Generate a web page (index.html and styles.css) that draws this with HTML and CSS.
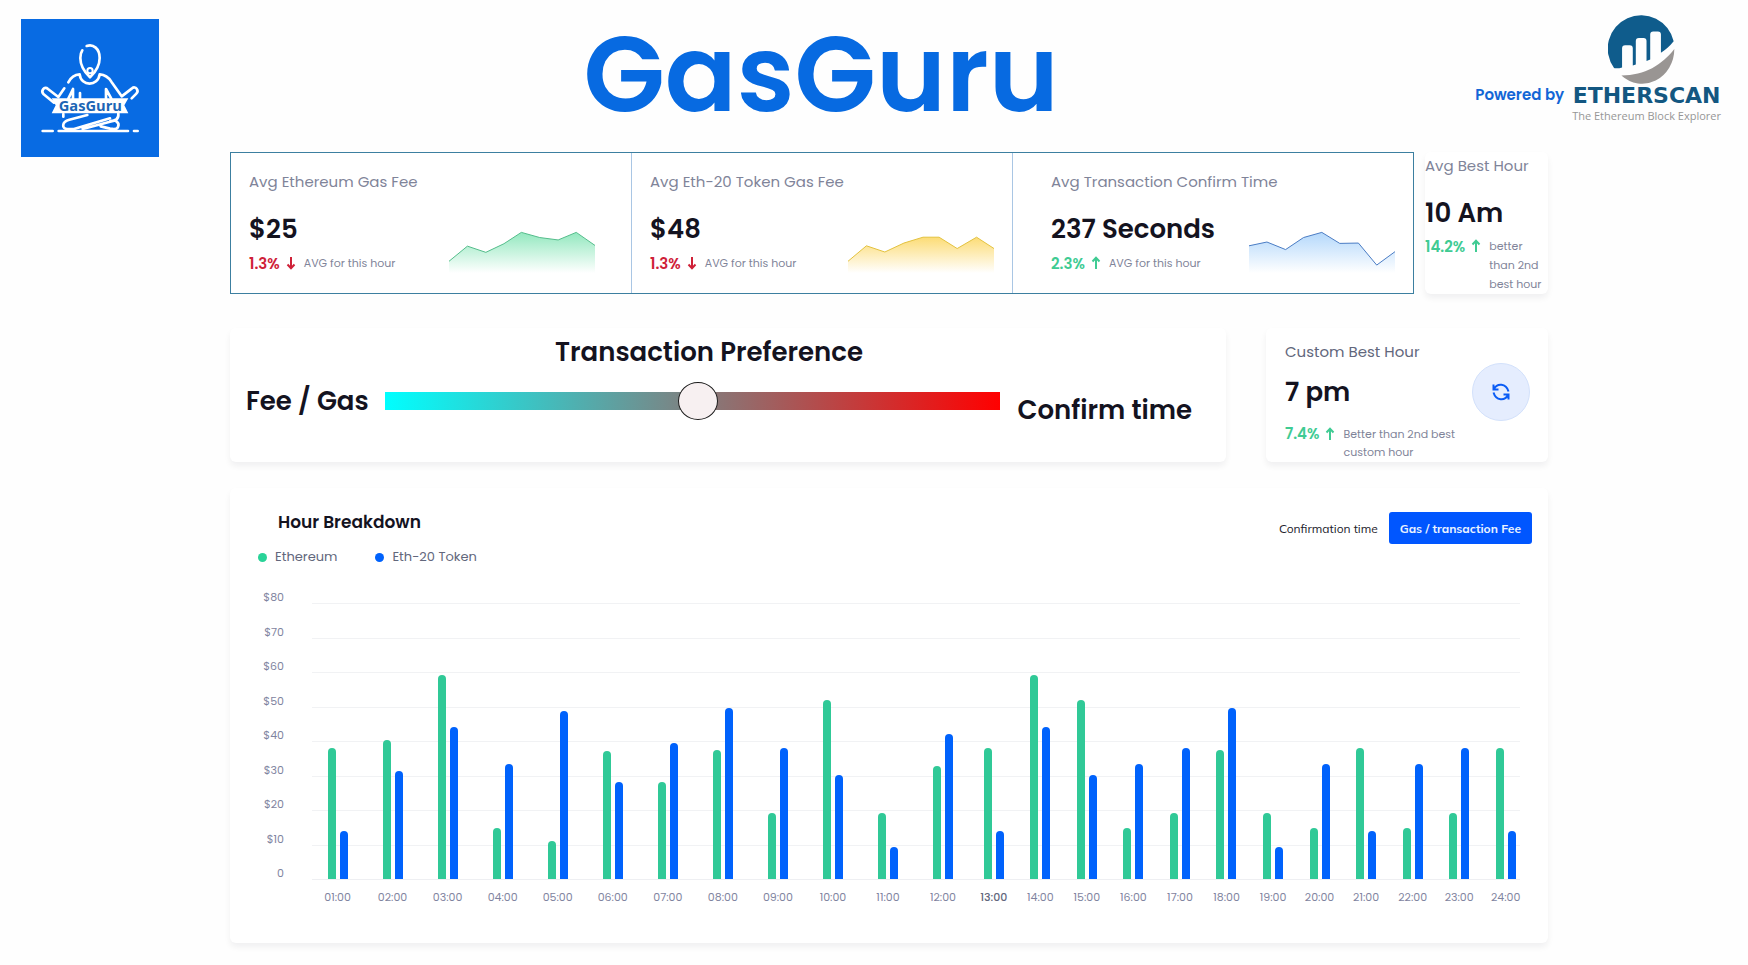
FILE: index.html
```html
<!DOCTYPE html>
<html lang="en">
<head>
<meta charset="utf-8">
<meta name="viewport" content="width=device-width, initial-scale=1">
<title>GasGuru</title>
<link rel="stylesheet" href="styles.css">
</head>
<body>
<svg class="defs" width="0" height="0" aria-hidden="true">
  <symbol id="arrow-up" viewBox="0 0 10 14"><path d="M5 13V2M1.500 5.500 5 1.800l3.500 3.700" fill="none" stroke="currentColor" stroke-width="2"/></symbol>
  <symbol id="arrow-down" viewBox="0 0 10 14"><path d="M5 1v11M1.500 8.500 5 12.200l3.500-3.700" fill="none" stroke="currentColor" stroke-width="2"/></symbol>
</svg>

<header class="header">
  <svg class="logo" viewBox="63 57 414 414" role="img" aria-label="GasGuru logo">
    <rect x="63" y="57" width="414" height="414" fill="#086be3"/>
    <g fill="none" stroke="#fff" stroke-width="8" stroke-linecap="round" stroke-linejoin="round">
      <path d="M260 138c20-7 39 8 39 36 0 21-12 42-29 58-17-16-29-37-29-58 0-9 2-17 6-23"/>
      <circle cx="270" cy="212" r="8" stroke-width="6"/>
      <path d="M205 247c7-14 18-23 34-24 4 37 55 37 60 0 16 1 27 9 35 22l31 44 31-24c11-9 22 7 13 16l-14 14"/>
      <path d="M193 265l-18 26-31-24c-11-10-23 5-13 16l31 25"/>
      <path d="M205 296l14-29v29M240 279v17M318 296v-29l16 29"/>
      <path d="M190 342v8M355 340c2 18-9 22-25 25l-82 22M262 345l-54 14c-24 6-23 28-6 28h20l108-32M330 364c16-7 30 3 24 17-3 8-15 7-24 5l-28-7"/>
      <path d="M128 393h30M176 393h208M402 393h11"/>
    </g>
    <path d="M155 295h230l-12 21 12 24H155l12-24z" fill="#fff"/>
    <text class="logo-text" x="271" y="333" text-anchor="middle">GasGuru</text>
  </svg>
  <h1 class="title">GasGuru</h1>
  <div class="powered">
    <span class="powered-by">Powered by</span>
    <a class="etherscan" href="#etherscan">
      <svg class="etherscan-mark" viewBox="479 42 200 208" aria-hidden="true">
        <path fill="#0f5c8c" d="M497 200A99.600 99.600 0 1 1 675 120C662 136 650 146 637 154V100q0-9-9-9h-14q-9 0-9 9v74l-11 5V119q0-9-9-9h-14q-9 0-9 9v70l-9 3V141q0-9-9-9h-14q-9 0-9 9v57q-12 4-25 2z"/>
        <path fill="#999593" d="M519 222C590 222 640 190 677 143A96 104 0 0 1 519 222z"/>
      </svg>
      <span class="etherscan-name">ETHERSCAN</span>
      <span class="etherscan-tag">The Ethereum Block Explorer</span>
    </a>
  </div>
</header>

<main class="page">
  <section class="row row-stats">
    <div class="stats">
      <article class="stat">
        <h2 class="label">Avg Ethereum Gas Fee</h2>
        <div class="stat-body">
          <div>
            <p class="value">$25</p>
            <p class="trend"><strong class="pct down">1.3%</strong><svg class="arrow down"><use href="#arrow-down"/></svg><span class="note">AVG for this hour</span></p>
          </div>
          <svg class="spark" viewBox="686 268 436 122" preserveAspectRatio="none" aria-hidden="true">
            <defs><linearGradient id="g1" x1="0" y1="0" x2="0" y2="1"><stop offset="0" stop-color="#93e8bf"/><stop offset="1" stop-color="#fff"/></linearGradient></defs>
            <path fill="url(#g1)" d="M686 356l55-44 55 18 54-25 52-33 55 15 55 7 54-22 56 38v80H686z"/>
            <path class="line" stroke="#54bd8b" d="M686 356l55-44 55 18 54-25 52-33 55 15 55 7 54-22 56 38"/>
          </svg>
        </div>
      </article>
      <article class="stat stat-middle">
        <h2 class="label">Avg Eth-20 Token Gas Fee</h2>
        <div class="stat-body">
          <div>
            <p class="value">$48</p>
            <p class="trend"><strong class="pct down">1.3%</strong><svg class="arrow down"><use href="#arrow-down"/></svg><span class="note">AVG for this hour</span></p>
          </div>
          <svg class="spark" viewBox="686 268 436 122" preserveAspectRatio="none" aria-hidden="true">
            <defs><linearGradient id="g2" x1="0" y1="0" x2="0" y2="1"><stop offset="0" stop-color="#fcdc76"/><stop offset="1" stop-color="#fff"/></linearGradient></defs>
            <path fill="url(#g2)" d="M686 356l55-45 55 18 57-26 57-17h48l54 33 58-33 52 33v71H686z"/>
            <path class="line" stroke="#e3c23f" d="M686 356l55-45 55 18 57-26 57-17h48l54 33 58-33 52 33"/>
          </svg>
        </div>
      </article>
      <article class="stat stat-last">
        <h2 class="label">Avg Transaction Confirm Time</h2>
        <div class="stat-body">
          <div>
            <p class="value">237 Seconds</p>
            <p class="trend"><strong class="pct up">2.3%</strong><svg class="arrow up"><use href="#arrow-up"/></svg><span class="note">AVG for this hour</span></p>
          </div>
          <svg class="spark" viewBox="670 268 407 122" preserveAspectRatio="none" aria-hidden="true">
            <defs><linearGradient id="g3" x1="0" y1="0" x2="0" y2="1"><stop offset="0" stop-color="#b4d8fb"/><stop offset="1" stop-color="#fff"/></linearGradient></defs>
            <path fill="url(#g3)" d="M670 311l50-11 52 22 50-35 51-15 50 32 52-1 51 64 51-39v62H670z"/>
            <path class="line" stroke="#4a7cc4" d="M670 311l50-11 52 22 50-35 51-15 50 32 52-1 51 64 51-39"/>
          </svg>
        </div>
      </article>
    </div>
    <article class="card best">
      <h2 class="label">Avg Best Hour</h2>
      <p class="value">10 Am</p>
      <p class="trend"><strong class="pct up">14.2%</strong><svg class="arrow up"><use href="#arrow-up"/></svg><span class="note">better than 2nd best hour</span></p>
    </article>
  </section>

  <section class="row row-pref">
    <article class="card pref">
      <h2 class="pref-title">Transaction Preference</h2>
      <div class="pref-body">
        <label class="pref-end" for="pref">Fee / Gas</label>
        <input class="slider" id="pref" type="range" min="0" max="100" value="51">
        <span class="pref-end pref-end-right">Confirm time</span>
      </div>
    </article>
    <article class="card custom">
      <div class="custom-text">
        <h2 class="label label-dark">Custom Best Hour</h2>
        <p class="value">7 pm</p>
        <p class="trend"><strong class="pct up">7.4%</strong><svg class="arrow up"><use href="#arrow-up"/></svg><span class="note">Better than 2nd best custom hour</span></p>
      </div>
      <button class="refresh" type="button" aria-label="Refresh">
        <svg viewBox="0 0 20 20" width="20" height="20" fill="none" stroke="#0a5cf5" stroke-width="2"><path d="M2.500 2.500v5h5M3 7C6 1 15 1 17.500 9.500M17.500 17.500v-5h-5M17 13C14 19 5 19 2.500 10.500"/></svg>
      </button>
    </article>
  </section>

  <section class="card breakdown">
    <div class="breakdown-head">
      <div>
        <h2 class="breakdown-title">Hour Breakdown</h2>
        <ul class="legend">
          <li><i class="dot dot-eth"></i>Ethereum</li>
          <li><i class="dot dot-token"></i>Eth-20 Token</li>
        </ul>
      </div>
      <div class="toggle">
        <button class="toggle-btn" type="button">Confirmation time</button>
        <button class="toggle-btn toggle-on" type="button">Gas / transaction Fee</button>
      </div>
    </div>
    <div class="chart">
      <div class="y-axis"><span>$80</span><span>$70</span><span>$60</span><span>$50</span><span>$40</span><span>$30</span><span>$20</span><span>$10</span><span>0</span></div>
      <div class="plot">
        <div class="plot-area">
          <div class="grid-lines"><i></i><i></i><i></i><i></i><i></i><i></i><i></i><i></i></div>
          <div class="bars">
            <div class="hour"><i style="--v:38"></i><i style="--v:14"></i></div>
            <div class="hour"><i style="--v:40.4"></i><i style="--v:31.4"></i></div>
            <div class="hour"><i style="--v:59.2"></i><i style="--v:44.2"></i></div>
            <div class="hour"><i style="--v:14.8"></i><i style="--v:33.4"></i></div>
            <div class="hour"><i style="--v:11"></i><i style="--v:48.8"></i></div>
            <div class="hour"><i style="--v:37.2"></i><i style="--v:28.2"></i></div>
            <div class="hour"><i style="--v:28"></i><i style="--v:39.5"></i></div>
            <div class="hour"><i style="--v:37.5"></i><i style="--v:49.7"></i></div>
            <div class="hour"><i style="--v:19"></i><i style="--v:38"></i></div>
            <div class="hour"><i style="--v:51.8"></i><i style="--v:30.1"></i></div>
            <div class="hour"><i style="--v:19"></i><i style="--v:9.3"></i></div>
            <div class="hour"><i style="--v:32.9"></i><i style="--v:41.9"></i></div>
            <div class="hour"><i style="--v:38"></i><i style="--v:14"></i></div>
            <div class="hour"><i style="--v:59.2"></i><i style="--v:44.2"></i></div>
            <div class="hour"><i style="--v:51.8"></i><i style="--v:30.1"></i></div>
            <div class="hour"><i style="--v:14.8"></i><i style="--v:33.4"></i></div>
            <div class="hour"><i style="--v:19"></i><i style="--v:38"></i></div>
            <div class="hour"><i style="--v:37.5"></i><i style="--v:49.7"></i></div>
            <div class="hour"><i style="--v:19"></i><i style="--v:9.3"></i></div>
            <div class="hour"><i style="--v:14.8"></i><i style="--v:33.4"></i></div>
            <div class="hour"><i style="--v:38"></i><i style="--v:14"></i></div>
            <div class="hour"><i style="--v:14.8"></i><i style="--v:33.4"></i></div>
            <div class="hour"><i style="--v:19"></i><i style="--v:38"></i></div>
            <div class="hour"><i style="--v:38"></i><i style="--v:14"></i></div>
          </div>
        </div>
        <div class="x-axis">
          <span>01:00</span><span>02:00</span><span>03:00</span><span>04:00</span><span>05:00</span><span>06:00</span><span>07:00</span><span>08:00</span><span>09:00</span><span>10:00</span><span>11:00</span><span>12:00</span><span class="current">13:00</span><span>14:00</span><span>15:00</span><span>16:00</span><span>17:00</span><span>18:00</span><span>19:00</span><span>20:00</span><span>21:00</span><span>22:00</span><span>23:00</span><span>24:00</span>
        </div>
      </div>
    </div>
  </section>
</main>
</body>
</html>
```

FILE: styles.css
```css
* { box-sizing: border-box; }

body {
  margin: 0;
  background: #fefefe;
  color: #14131f;
  font-family: Poppins, Inter, "Open Sans", sans-serif;
}

h1, h2, p, ul { margin: 0; padding: 0; font-weight: 400; }
button { font: inherit; border: 0; cursor: pointer; }
.defs { display: block; height: 0; }

/* Header */
.header {
  display: grid;
  grid-template-columns: 138px 1fr auto;
  padding: 15px 27px 0 21px;
}
.logo { display: block; width: 138px; height: 138px; margin-top: 4px; }
.logo-text { font: 700 44px "Open Sans", sans-serif; fill: #1c65b5; }
.title {
  padding-left: 8px;
  color: #076ae1;
  font-size: 106px;
  font-weight: 600;
  line-height: 118px;
  text-align: center;
}
.powered { display: flex; align-items: flex-start; gap: 8px; }
.powered-by {
  padding-top: 70px;
  color: #1366d6;
  font-size: 15px;
  font-weight: 600;
  line-height: 20px;
}
.etherscan {
  display: flex;
  flex-direction: column;
  align-items: center;
  text-decoration: none;
}
.etherscan-mark { width: 67px; height: 70px; margin-right: 10px; }
.etherscan-name {
  color: #135781;
  font: 700 22px/22px "DejaVu Sans", sans-serif;
}
.etherscan-tag {
  color: #969696;
  font: 400 11px/18px "Open Sans", sans-serif;
}

/* Page */
.page { margin-top: -5px; padding: 0 200px 20px 230px; }
.row { display: flex; }
.card {
  border-radius: 6px;
  background: #fff;
  box-shadow: 0 4px 6px rgba(20, 20, 40, 0.06);
}
.label { color: #7f8499; font-size: 15px; line-height: 22px; }
.label-dark { color: #62677c; }
.value { font-size: 26px; font-weight: 600; line-height: 32px; }
.trend { display: flex; align-items: flex-start; line-height: 19px; }
.pct { font-size: 15px; font-weight: 600; }
.arrow { flex: none; width: 10px; height: 14px; margin: 2px 8px 0 6px; }
.note { color: #7f8499; font-size: 11px; }
.up { color: #3fcb93; }
.down { color: #cf2138; }

/* Stats */
.row-stats { gap: 11px; }
.stats {
  display: grid;
  flex: 1;
  grid-template-columns: repeat(3, 1fr);
  gap: 18px;
  border: 1px solid #3c7fa0;
  background: #fff;
}
.stat { padding: 18px 18px 19px; }
.stat-middle { border: solid #a9c6e4; border-width: 0 1px; }
.stat-last { padding-left: 20px; }
.stat-body { display: flex; justify-content: space-between; align-items: flex-end; margin-top: 20px; }
.stat-body .trend { margin-top: 9px; }
.spark { width: 146px; height: 42px; }
.line { fill: none; stroke-width: 1; vector-effect: non-scaling-stroke; }
.best { width: 123px; padding: 3px 0 0; }
.best .value { margin-top: 20px; }
.best .trend { margin-top: 8px; }

/* Preference */
.row-pref { gap: 40px; margin-top: 34px; }
.pref { flex: 1; padding: 8px 16px; }
.pref-title { padding-right: 38px; font-size: 26px; font-weight: 600; line-height: 32px; text-align: center; }
.pref-body { display: flex; align-items: flex-start; margin-top: 15px; }
.pref-end { font-size: 26px; font-weight: 600; line-height: 36px; white-space: nowrap; }
.pref-end-right { padding: 9px 18px 0 0; }
.slider {
  -webkit-appearance: none;
  appearance: none;
  flex: 1;
  min-width: 0;
  height: 18px;
  margin: 9px 18px 0 16px;
  background: linear-gradient(to right, #00ffff, #ff0000);
}
.slider::-webkit-slider-thumb {
  -webkit-appearance: none;
  width: 40px;
  height: 38px;
  border: 1px solid #1c1c1c;
  border-radius: 50%;
  background: #f7f0f1;
}
.custom { display: flex; width: 282px; padding: 13px 18px 1px 19px; }
.custom-text { flex: 1; }
.custom .value { margin-top: 13px; }
.custom .trend { margin-top: 17px; line-height: 18px; }
.refresh {
  display: grid;
  place-items: center;
  flex: none;
  width: 58px;
  height: 58px;
  margin-top: 22px;
  padding: 0;
  border: 1px solid #d3e1fb;
  border-radius: 50%;
  background: #e5edfe;
}

/* Breakdown */
.breakdown { margin-top: 26px; padding: 21px 16px 36px 28px; }
.breakdown-head { display: flex; justify-content: space-between; align-items: flex-start; }
.breakdown-title { padding-left: 20px; font-size: 17px; font-weight: 600; line-height: 26px; }
.legend {
  display: flex;
  gap: 38px;
  margin-top: 12px;
  color: #62677c;
  font-size: 13px;
  line-height: 20px;
  list-style: none;
}
.legend li { display: flex; align-items: center; gap: 8px; }
.dot { width: 9px; height: 9px; border-radius: 50%; }
.dot-eth { background: #29d398; }
.dot-token { background: #0062fc; }
.toggle { display: flex; gap: 11px; margin-top: 3px; }
.toggle-btn {
  height: 32px;
  padding: 0;
  background: none;
  color: #22222c;
  font: 400 12px Mulish, Nunito, Lato, sans-serif;
}
.toggle-on {
  padding: 0 11px;
  border-radius: 3px;
  background: #0056ff;
  color: #eaf3ff;
  font-weight: 700;
}
.chart { display: flex; gap: 28px; margin-top: 20px; padding-right: 12px; }
.y-axis {
  display: flex;
  flex-direction: column;
  justify-content: space-between;
  width: 26px;
  height: 296px;
  color: #7f84a0;
  font-size: 11px;
  line-height: 20px;
  text-align: right;
}
.plot { flex: 1; padding-top: 16px; }
.plot-area { position: relative; border-bottom: 1px solid #eeeff2; }
.grid-lines {
  position: absolute;
  inset: 0;
  display: grid;
  grid-template-rows: repeat(8, 1fr);
}
.grid-lines i { border-top: 1px solid #f1f2f4; }
.bars, .x-axis {
  position: relative;
  display: grid;
  grid-template-columns: repeat(12, 110fr) repeat(12, 93fr);
  margin: 0 -9px 0 -2px;
}
.bars { height: 276px; }
.hour { display: flex; justify-content: center; align-items: flex-end; gap: 4px; }
.hour i {
  width: 8px;
  height: calc(var(--v) * 100% / 80);
  border-radius: 4px 4px 0 0;
  background: #30c997;
}
.hour i + i { background: #0062fc; }
.x-axis { margin-top: 7px; color: #7f84a0; font-size: 11px; line-height: 20px; text-align: center; }
.current { color: #62677c; font-weight: 500; }
```
